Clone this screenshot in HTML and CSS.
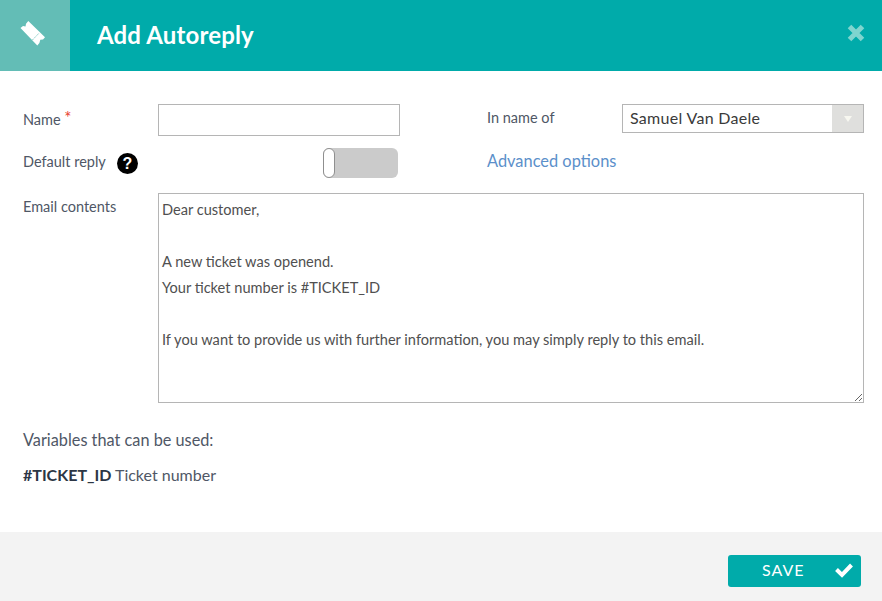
FILE: index.html
```html
<!DOCTYPE html>
<html>
<head>
    <title>Add Autoreply</title>
    <link rel="stylesheet" href="styles.css">
</head>
<body>
    <div class="modal">
        <div class="modal-header">
            <div class="header-icon">
                <svg width="40" height="36" viewBox="0 0 40 36">
                    <path fill="#fff" d="M5.5 13 L8 10.9 L10.5 11.5 L11 8.8 L13.3 6 L30 22.3 L28 24.4 L25.3 24.8 L24.4 28 L22.3 30.5 Z"/>
                    <path fill="none" stroke="#63bdb6" stroke-width="1" stroke-dasharray="1.5 1.5" d="M17.6 24.8 L24.2 18"/>
                </svg>
            </div>
            <h1 class="modal-title">Add Autoreply</h1>
            <svg class="close-icon" width="18" height="18" viewBox="0 0 18 18">
                <path fill="none" stroke="#7fd5cf" stroke-width="5" d="M2.5 2.5 L15.5 15.5 M15.5 2.5 L2.5 15.5"/>
            </svg>
        </div>

        <form class="modal-body">
            <div class="form-top">
                <div class="form-col">
                    <div class="form-row row-name">
                        <label class="form-label" for="name">Name <span class="required">*</span></label>
                        <input class="text-input" type="text" id="name">
                    </div>
                    <div class="form-row row-default">
                        <span class="form-label">Default reply</span>
                        <span class="help-badge">?</span>
                        <span class="toggle"><span class="toggle-knob"></span></span>
                    </div>
                </div>
                <div class="form-col col-right">
                    <div class="form-row row-owner">
                        <span class="form-label owner-label">In name of</span>
                        <div class="select-box">
                            <span class="select-value">Samuel Van Daele</span>
                            <span class="select-arrow"></span>
                        </div>
                    </div>
                    <a class="advanced-link" href="#">Advanced options</a>
                </div>
            </div>

            <div class="form-row row-contents">
                <label class="form-label contents-label" for="contents">Email contents</label>
                <textarea class="contents-input" id="contents">Dear customer,

A new ticket was openend.
Your ticket number is #TICKET_ID

If you want to provide us with further information, you may simply reply to this email.</textarea>
            </div>

            <p class="vars-title">Variables that can be used:</p>
            <p class="vars-item"><strong>#TICKET_ID</strong> Ticket number</p>
        </form>

        <div class="modal-footer">
            <button type="button" class="save-btn">
                <span class="save-text">SAVE</span>
                <svg width="20" height="18" viewBox="0 0 20 18">
                    <path fill="none" stroke="#fff" stroke-width="4" d="M2.5 7.5 L8 13 L17.5 3"/>
                </svg>
            </button>
        </div>
    </div>
</body>
</html>
```

FILE: styles.css
```css
* {
    box-sizing: border-box;
}

body {
    font-family: Lato, "Open Sans", sans-serif;
    background-color: #fff;
    color: #4f5766;
    margin: 0;
    padding: 0;
}

.modal {
    width: 882px;
    height: 601px;
    display: flex;
    flex-direction: column;
}

.modal-header {
    height: 71px;
    background-color: #00abaa;
    display: flex;
    align-items: center;
}

.header-icon {
    width: 70px;
    height: 71px;
    background-color: #63bdb6;
    display: flex;
    align-items: center;
    justify-content: center;
    padding-bottom: 5px;
}

.modal-title {
    margin: 0 0 2px 27px;
    flex: 1;
    color: #fff;
    font-size: 24px;
    font-weight: 700;
    letter-spacing: 0.15px;
}

.close-icon {
    margin: 0 17px 5px 0;
}

.modal-body {
    flex: 1;
    padding: 33px 18px 0 23px;
}

.form-top {
    display: flex;
    height: 89px;
}

.form-col {
    width: 377px;
}

.col-right {
    width: 377px;
    margin-left: 87px;
}

.form-row {
    display: flex;
}

.form-label {
    font-size: 14.5px;
    color: #4f5766;
}

.row-name {
    align-items: center;
    height: 32px;
}

.row-name .form-label {
    width: 135px;
    padding-bottom: 6px;
}

.required {
    color: #e8402f;
    font-size: 17px;
    vertical-align: 1px;
}

.text-input {
    width: 242px;
    height: 32px;
    border: 1px solid #b5b5b5;
    background: #fff;
}

.row-default {
    align-items: center;
    margin-top: 12px;
    height: 30px;
}

.row-default .form-label {
    width: 94px;
    padding-bottom: 4px;
}

.help-badge {
    width: 21px;
    height: 21px;
    border-radius: 50%;
    background-color: #000;
    color: #fff;
    font-family: "Liberation Sans", sans-serif;
    font-size: 16px;
    font-weight: 700;
    line-height: 21px;
    text-align: center;
}

.toggle {
    width: 75px;
    height: 30px;
    margin-left: 185px;
    border-radius: 6px;
    background-color: #cbcbcb;
}

.toggle-knob {
    display: block;
    width: 12px;
    height: 30px;
    border: 1px solid #8f8f8f;
    border-radius: 6px;
    background-color: #fff;
}

.row-owner {
    align-items: center;
    height: 29px;
}

.row-owner .owner-label {
    width: 135px;
    padding-bottom: 2px;
}

.select-box {
    width: 242px;
    height: 29px;
    border: 1px solid #b5b5b5;
    display: flex;
    align-items: center;
}

.select-value {
    flex: 1;
    padding: 0 0 2px 7px;
    font-size: 16px;
    letter-spacing: 0.3px;
    color: #3a3a3a;
}

.select-arrow {
    width: 31px;
    height: 27px;
    background-color: #dfdfdd;
    position: relative;
}

.select-arrow::after {
    content: "";
    position: absolute;
    left: 12px;
    top: 11px;
    border-left: 4px solid transparent;
    border-right: 4px solid transparent;
    border-top: 6px solid #f7f7f0;
}

.advanced-link {
    display: block;
    margin-top: 18px;
    font-size: 16.4px;
    color: #5b8fca;
    text-decoration: none;
}

.row-contents {
    align-items: flex-start;
}

.contents-label {
    width: 135px;
    padding-top: 5px;
}

.contents-input {
    width: 706px;
    height: 210px;
    padding: 3px;
    border: 1px solid #b5b5b5;
    font-family: Lato, "Open Sans", sans-serif;
    font-size: 14.6px;
    line-height: 26px;
    color: #505050;
}

.vars-title {
    margin: 27px 0 0;
    font-size: 16.3px;
    line-height: 20px;
}

.vars-item {
    margin: 15px 0 0;
    font-size: 16px;
    line-height: 20px;
}

.vars-item strong {
    color: #2c3645;
}

.modal-footer {
    height: 69px;
    background-color: #f3f3f3;
    padding: 23px 21px 0 0;
    display: flex;
    justify-content: flex-end;
    align-items: flex-start;
}

.save-btn {
    width: 133px;
    height: 32px;
    padding: 0 7px 0 34px;
    border: none;
    border-radius: 3px;
    background-color: #00abaa;
    color: #fff;
    font-family: Lato, "Open Sans", sans-serif;
    font-size: 16px;
    letter-spacing: 1px;
    display: flex;
    align-items: center;
    justify-content: space-between;
    cursor: pointer;
}

.save-text {
    padding-bottom: 4px;
}
```
